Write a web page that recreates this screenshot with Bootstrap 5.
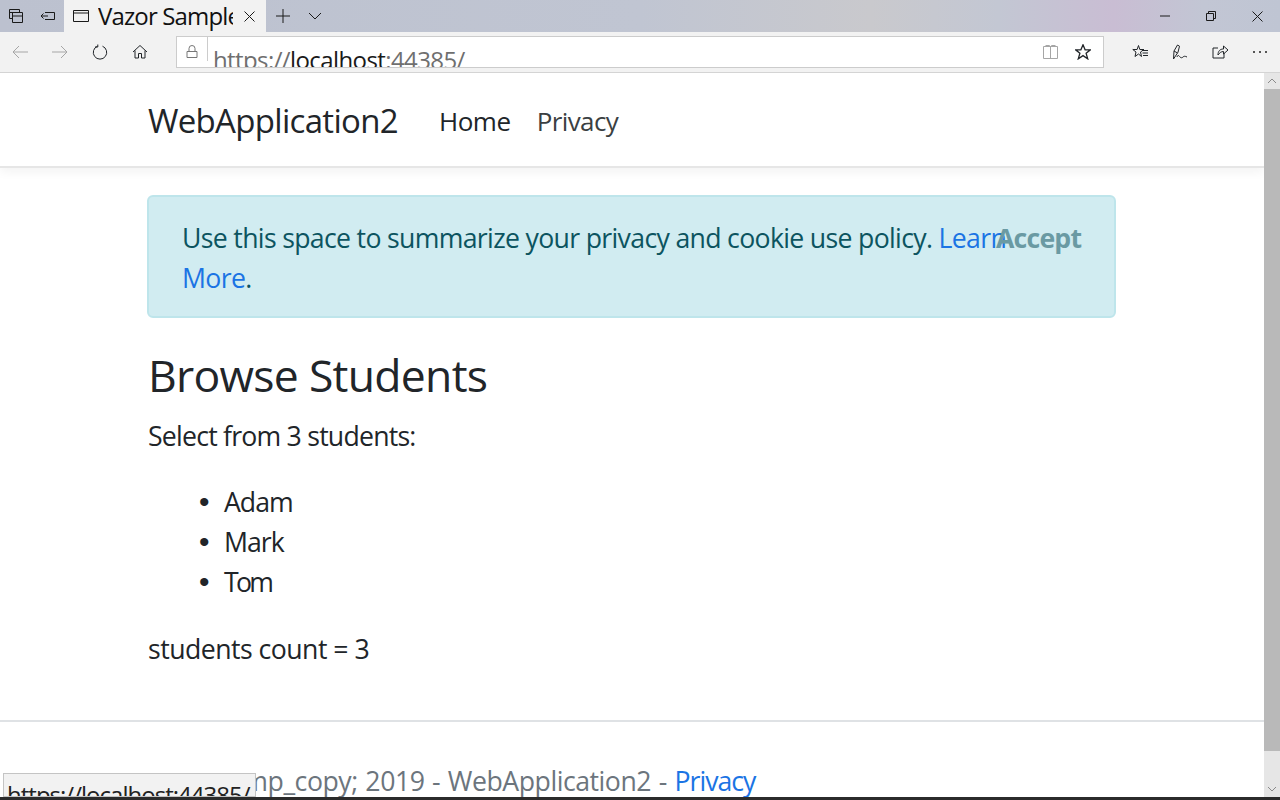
<!DOCTYPE html>
<html lang="en">
<head>
<meta charset="utf-8">
<title>Vazor Sample</title>
<link rel="stylesheet" href="https://cdn.jsdelivr.net/npm/bootstrap@5.3.0/dist/css/bootstrap.min.css">
<style>
html,body{height:100%;overflow:hidden;}
body{font-family:"Open Sans","Noto Sans",sans-serif;background:#fff;color:#212529;}
svg{display:block;fill:none;stroke:currentColor;stroke-width:1;}
.shell{width:1280px;height:800px;position:relative;overflow:hidden;}
.tabbar{height:32px;background:linear-gradient(90deg,#bcc1cf 0%,#c0c5d2 50%,#c9c9cd 68%,#c3c7d3 78%,#c9bdd3 87%,#c2c6d4 94%,#bfc5d3 100%);color:#1a1a1a;}
.side-btn{width:32px;height:32px;}
.browser-tab{width:202px;height:32px;background:#f2f2f2;padding:0 11px 0 9px;}
.tab-name{font-size:24px;line-height:32px;width:135px;margin-left:9px;overflow:hidden;white-space:nowrap;color:#111;letter-spacing:-.85px;}
.win-btn{width:46px;height:32px;}
.toolbar{height:41px;background:#f2f2f2;border-bottom:1px solid #d4d4d4;}
.tool-btn{width:40px;height:40px;flex:none;}
.muted-ico{color:#a6a6a6;}
.addr{width:928px;height:32px;margin:0 16px;background:#fff;border:1px solid #ccc;overflow:hidden;}
.lock-cell{width:30px;height:30px;color:#777;}
.addr-sep{width:1px;height:24px;background:#ccc;align-self:flex-start;}
.url{font-size:24px;line-height:30px;margin-left:5px;padding-top:8px;white-space:nowrap;color:#6f6f6f;letter-spacing:-.6px;}
.url b{font-weight:400;color:#1a1a1a;}
.addr-icons{height:30px;gap:17px;padding-right:12px;}
.viewport{height:724px;}
.page{width:1264px;height:724px;overflow:hidden;}
.top-nav{height:95px;background:#fff;border-bottom:2px solid #e6e6e6;box-shadow:0 4px 10px rgba(0,0,0,.05);padding:3px 0 0;}
.wrap{width:968px;margin-left:148px;}
.brand{font-size:33px;color:#212529;letter-spacing:-.69px;}
.top-link{font-size:26px;color:#212529;letter-spacing:-.45px;}
.top-link.dim{color:#3b3f42;letter-spacing:-.6px;}
.links{gap:26px;margin-left:41px;}
.notice{width:969px;margin:27px 0 0 -1px;height:123px;background:#d1ecf1;border:2px solid #bee5eb;border-radius:6px;padding:21px 33px 0;color:#0c5460;font-size:26.67px;line-height:40px;position:relative;letter-spacing:-.675px;}
.notice a{color:#1b74e4;text-decoration:none;}
.accept{position:absolute;left:847px;top:21px;font-weight:700;color:#6a9aa3;letter-spacing:-.8px;}
.headline{font-size:44.5px;line-height:54px;margin:30px 0 0;font-weight:400;letter-spacing:-.72px;}
.body-line{font-size:26.67px;line-height:40px;margin:0;letter-spacing:-.53px;}
.pick-line{margin-top:14px;letter-spacing:-.78px;}
.names{font-size:26.67px;line-height:40px;margin:26px 0 27px;padding-left:76px;letter-spacing:-1px;}
.tight-name{letter-spacing:-2.7px;}
.names li::marker{font-family:"Liberation Sans",sans-serif;font-size:30px;content:"\2022\2002\200A";}
.foot{border-top:2px solid #dfe2e5;margin-top:51px;height:90px;color:#6c757d;font-size:26.67px;line-height:40px;padding-top:39px;letter-spacing:-.47px;word-spacing:1.2px;}
.foot-line{padding-left:81px;white-space:nowrap;}
.foot a{color:#1b74e4;text-decoration:none;letter-spacing:-1px;}
.scroll{width:16px;height:724px;background:#e6e6e6;}
.sc-end{height:16px;color:#8a8a8a;}
.sc-thumb{height:662px;background:#b9b9b9;}
.sc-rest{flex:1;}
.tip{position:absolute;left:3px;top:773px;width:253px;height:24px;background:#f2f2f2;border:1px solid #c4c4c4;overflow:hidden;font-size:24px;line-height:30px;padding:6px 0 0 3px;white-space:nowrap;color:#222;letter-spacing:-.98px;}
.edge{position:absolute;left:0;top:797px;width:1280px;height:3px;background:#2b2b2b;}
</style>
</head>
<body>
<div class="shell">
  <div class="tabbar d-flex align-items-center">
    <div class="side-btn d-flex align-items-center justify-content-center"><svg width="16" height="16" viewBox="0 0 16 16"><path d="M1.500 1.500h10v3M1.500 1.500v9h3M4.500 4.500h10v10h-10zM4.500 8h10M1.500 4.500h10"/></svg></div>
    <div class="side-btn d-flex align-items-center justify-content-center"><svg width="16" height="16" viewBox="0 0 16 16"><path d="M5 4.500h9.500v7H5M1 8h7M3.500 5.500L1 8l2.500 2.500"/></svg></div>
    <div class="browser-tab d-flex align-items-center">
      <svg width="16" height="14" viewBox="0 0 16 14"><path d="M.5 1.500h15v11H.5zM.5 4h15"/></svg>
      <div class="tab-name">Vazor Sample</div>
      <svg class="ms-auto" width="11" height="11" viewBox="0 0 11 11"><path d="M.5.5l10 10M10.500.5l-10 10"/></svg>
    </div>
    <div class="d-flex align-items-center justify-content-center" style="width:34px"><svg width="14" height="14" viewBox="0 0 14 14"><path d="M7 0v14M0 7h14"/></svg></div>
    <div class="d-flex align-items-center justify-content-center" style="width:30px"><svg width="14" height="8" viewBox="0 0 14 8"><path d="M1 1l6 6 6-6"/></svg></div>
    <div class="ms-auto d-flex">
      <div class="win-btn d-flex align-items-center justify-content-center"><svg width="10" height="2" viewBox="0 0 10 2"><path d="M0 1h10"/></svg></div>
      <div class="win-btn d-flex align-items-center justify-content-center"><svg width="10" height="10" viewBox="0 0 10 10"><path d="M.5 2.500h7v7h-7zM2.500 2.500v-2h7v7h-2"/></svg></div>
      <div class="win-btn d-flex align-items-center justify-content-center"><svg width="11" height="11" viewBox="0 0 11 11"><path d="M.5.5l10 10M10.500.5l-10 10"/></svg></div>
    </div>
  </div>
  <div class="toolbar d-flex align-items-center">
    <div class="tool-btn d-flex align-items-center justify-content-center muted-ico"><svg width="16" height="14" viewBox="0 0 16 14"><path d="M16 7H1M7 1L1 7l6 6"/></svg></div>
    <div class="tool-btn d-flex align-items-center justify-content-center muted-ico"><svg width="16" height="14" viewBox="0 0 16 14"><path d="M0 7h15M9 1l6 6-6 6"/></svg></div>
    <div class="tool-btn d-flex align-items-center justify-content-center"><svg width="16" height="16" viewBox="0 0 16 16"><path d="M5.500 2.200A6.700 6.700 0 1 0 10.500 2.200M5.800 .5v2.500H3"/></svg></div>
    <div class="tool-btn d-flex align-items-center justify-content-center"><svg width="16" height="16" viewBox="0 0 16 16"><path d="M1 8l7-6.500L15 8M3 6.500v7.500h3.500V9.500h3V14H13V6.500"/></svg></div>
    <div class="addr d-flex">
      <div class="lock-cell d-flex align-items-center justify-content-center"><svg width="12" height="14" viewBox="0 0 12 14"><path d="M1 6.500h10v6H1zM3 6.500V3.500a3 3 0 0 1 6 0v3"/></svg></div>
      <div class="addr-sep"></div>
      <div class="url">https://<b>localhost</b>:44385/</div>
      <div class="addr-icons ms-auto d-flex align-items-center">
        <svg class="muted-ico" width="15" height="14" viewBox="0 0 15 14"><path d="M.5 1.500h14v12H.5zM7.500 1.500v12M2.500.5h4l1 1 1-1h4"/></svg>
        <svg width="16" height="16" viewBox="0 0 16 16"><path d="M8 .8l2.100 5h5.300l-4.300 3.400 1.600 5.600L8 11.600l-4.700 3.200 1.600-5.600L.6 5.800h5.300z" stroke-width="1.300"/></svg>
      </div>
    </div>
    <div class="tool-btn d-flex align-items-center justify-content-center"><svg width="16" height="16" viewBox="0 0 16 16"><path d="M6.500 1.500l1.300 4H12L8.500 8l1 4.500-3-2.500-3.500 2.500L4 8 .8 5.500h4.300zM10 6.500h6M10.500 9H16M11 11.500h5"/></svg></div>
    <div class="tool-btn d-flex align-items-center justify-content-center"><svg width="16" height="16" viewBox="0 0 16 16"><path d="M1.500 15L2 7l3.500-6 2 1.200-1.500 6-4.500 6.800M2 7l3.500 2M5 13c1-3 2-1 3 0s2 1 3 0 2-1 4 0"/></svg></div>
    <div class="tool-btn d-flex align-items-center justify-content-center"><svg width="16" height="16" viewBox="0 0 16 16"><path d="M6 4H1v10h11V9M6 11c0-4 2-6 5.500-6V2L16 6l-4.500 4V7.500C9 7.500 7.500 9 6 11z"/></svg></div>
    <div class="tool-btn d-flex align-items-center justify-content-center"><svg width="16" height="4" viewBox="0 0 16 4" style="stroke:none;fill:#222"><circle cx="2" cy="2" r="1"/><circle cx="8" cy="2" r="1"/><circle cx="14" cy="2" r="1"/></svg></div>
  </div>
  <div class="viewport d-flex">
    <div class="page">
      <nav class="navbar top-nav">
        <div class="wrap d-flex align-items-center">
          <a class="brand text-decoration-none" href="#">WebApplication2</a>
          <div class="links d-flex">
            <a class="top-link text-decoration-none" href="#">Home</a>
            <a class="top-link dim text-decoration-none" href="#">Privacy</a>
          </div>
        </div>
      </nav>
      <div class="wrap">
        <div class="notice" role="alert">Use this space to summarize your privacy and cookie use policy. <a href="#">Learn<br>More</a>.<span class="accept">Accept</span></div>
        <h1 class="headline">Browse Students</h1>
        <p class="body-line pick-line">Select from 3 students:</p>
        <ul class="names">
          <li>Adam</li>
          <li>Mark</li>
          <li><span class="tight-name">Tom</span></li>
        </ul>
        <p class="body-line">students count = 3</p>
      </div>
      <div class="foot"><div class="wrap foot-line">amp_copy; 2019 - WebApplication2 - <a href="#">Privacy</a></div></div>
    </div>
    <div class="scroll d-flex flex-column">
      <div class="sc-end d-flex align-items-center justify-content-center"><svg width="10" height="6" viewBox="0 0 10 6"><path d="M1 5l4-4 4 4"/></svg></div>
      <div class="sc-thumb"></div>
      <div class="sc-rest"></div>
      <div class="sc-end d-flex align-items-center justify-content-center"><svg width="10" height="6" viewBox="0 0 10 6"><path d="M1 1l4 4 4-4"/></svg></div>
    </div>
  </div>
  <div class="tip">https://localhost:44385/</div>
  <div class="edge"></div>
</div>
<script src="https://cdn.jsdelivr.net/npm/bootstrap@5.3.0/dist/js/bootstrap.bundle.min.js"></script>
</body>
</html>
